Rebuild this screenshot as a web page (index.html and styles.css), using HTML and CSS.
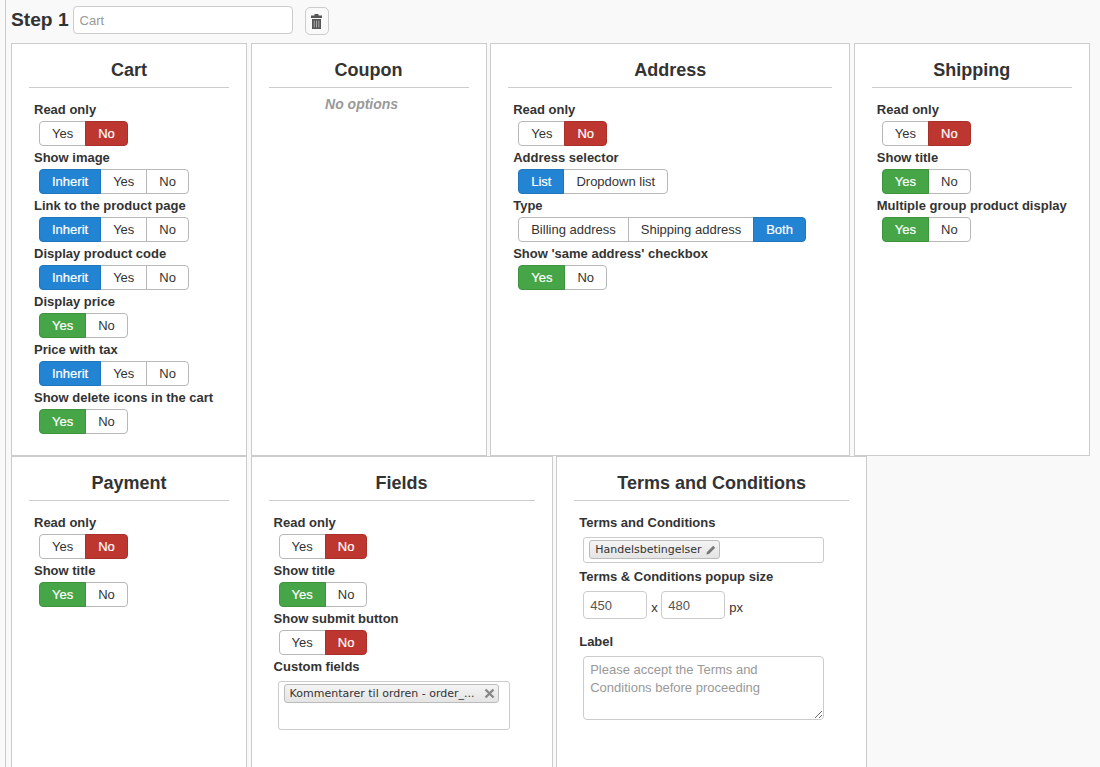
FILE: index.html
```html
<!DOCTYPE html>
<html lang="en">
<head>
<meta charset="utf-8">
<title>Checkout workflow</title>
<link rel="stylesheet" href="styles.css">
</head>
<body>
<main class="main">
  <div class="step-head">
    <span class="step-title">Step 1</span>
    <input class="step-name" type="text" placeholder="Cart">
    <button class="trash" type="button" aria-label="Delete">
      <svg width="11" height="15" viewBox="0 0 11 15"><path fill="#555" d="M3.500 0h4v1.500H11V4H0V1.500h3.500zM1 5h9v10H1z"/><path fill="#aaa" d="M2.700 6.500h1v7h-1zM5 6.500h1v7H5zM7.300 6.500h1v7h-1z"/></svg>
    </button>
  </div>

  <div class="row row-first">
    <section class="card w-236">
      <h3 class="card-title">Cart</h3>
      <div class="label">Read only</div>
      <div class="toggle"><span class="opt">Yes</span><span class="opt red">No</span></div>
      <div class="label">Show image</div>
      <div class="toggle"><span class="opt blue">Inherit</span><span class="opt">Yes</span><span class="opt">No</span></div>
      <div class="label">Link to the product page</div>
      <div class="toggle"><span class="opt blue">Inherit</span><span class="opt">Yes</span><span class="opt">No</span></div>
      <div class="label">Display product code</div>
      <div class="toggle"><span class="opt blue">Inherit</span><span class="opt">Yes</span><span class="opt">No</span></div>
      <div class="label">Display price</div>
      <div class="toggle"><span class="opt green">Yes</span><span class="opt">No</span></div>
      <div class="label">Price with tax</div>
      <div class="toggle"><span class="opt blue">Inherit</span><span class="opt">Yes</span><span class="opt">No</span></div>
      <div class="label">Show delete icons in the cart</div>
      <div class="toggle"><span class="opt green">Yes</span><span class="opt">No</span></div>
    </section>
    <section class="card w-236">
      <h3 class="card-title">Coupon</h3>
      <div class="no-options">No options</div>
    </section>
    <section class="card w-360">
      <h3 class="card-title">Address</h3>
      <div class="label">Read only</div>
      <div class="toggle"><span class="opt">Yes</span><span class="opt red">No</span></div>
      <div class="label">Address selector</div>
      <div class="toggle"><span class="opt blue">List</span><span class="opt">Dropdown list</span></div>
      <div class="label">Type</div>
      <div class="toggle"><span class="opt">Billing address</span><span class="opt">Shipping address</span><span class="opt blue">Both</span></div>
      <div class="label">Show 'same address' checkbox</div>
      <div class="toggle"><span class="opt green">Yes</span><span class="opt">No</span></div>
    </section>
    <section class="card w-236">
      <h3 class="card-title">Shipping</h3>
      <div class="label">Read only</div>
      <div class="toggle"><span class="opt">Yes</span><span class="opt red">No</span></div>
      <div class="label">Show title</div>
      <div class="toggle"><span class="opt green">Yes</span><span class="opt">No</span></div>
      <div class="label">Multiple group product display</div>
      <div class="toggle"><span class="opt green">Yes</span><span class="opt">No</span></div>
    </section>
  </div>

  <div class="row row-second">
    <section class="card w-236">
      <h3 class="card-title">Payment</h3>
      <div class="label">Read only</div>
      <div class="toggle"><span class="opt">Yes</span><span class="opt red">No</span></div>
      <div class="label">Show title</div>
      <div class="toggle"><span class="opt green">Yes</span><span class="opt">No</span></div>
    </section>
    <section class="card w-302">
      <h3 class="card-title">Fields</h3>
      <div class="label">Read only</div>
      <div class="toggle"><span class="opt">Yes</span><span class="opt red">No</span></div>
      <div class="label">Show title</div>
      <div class="toggle"><span class="opt green">Yes</span><span class="opt">No</span></div>
      <div class="label">Show submit button</div>
      <div class="toggle"><span class="opt">Yes</span><span class="opt red">No</span></div>
      <div class="label">Custom fields</div>
      <div class="tag-box tag-box-fields">
        <span class="tag tag-long"><span class="tag-text">Kommentarer til ordren - order_...</span>
          <svg class="tag-icon" width="11" height="11" viewBox="0 0 11 11"><path d="M1.500 1.500l8 8m0-8l-8 8" stroke="#888" stroke-width="2.400" fill="none"/></svg>
        </span>
      </div>
    </section>
    <section class="card w-311">
      <h3 class="card-title">Terms and Conditions</h3>
      <div class="label">Terms and Conditions</div>
      <div class="tag-box tag-box-terms">
        <span class="tag"><span class="tag-text">Handelsbetingelser</span>
          <svg class="tag-icon" width="10" height="10" viewBox="0 0 10 10"><path d="M7.200 .8l2 2L3 9 .4 9.600 1 7z" fill="#777"/></svg>
        </span>
      </div>
      <div class="label label-after-box">Terms &amp; Conditions popup size</div>
      <div class="size-row">
        <input class="size-input" type="text" value="450">
        <span class="size-sep">x</span>
        <input class="size-input" type="text" value="480">
        <span class="size-unit">px</span>
      </div>
      <div class="label label-spaced">Label</div>
      <textarea class="terms-label" placeholder="Please accept the Terms and Conditions before proceeding"></textarea>
    </section>
  </div>
</main>
</body>
</html>
```
FILE: styles.css
```css
* { box-sizing: border-box; }
html, body {
  margin: 0;
  height: 100%;
  overflow: hidden;
  background: #f9f9f9;
}
body {
  font-family: "Liberation Sans", Arial, sans-serif;
  font-size: 13px;
  color: #333;
}
.main {
  margin-left: 5px;
  min-height: 100%;
  border-left: 1px solid #ccc;
  padding: 6px 5px 0;
}
.step-head {
  display: flex;
  align-items: flex-start;
  height: 37px;
}
.step-title {
  font-size: 19.200px;
  font-weight: bold;
  line-height: 27px;
  margin-right: 4px;
}
.step-name {
  width: 220px;
  height: 28px;
  padding: 0 6px;
  border: 1px solid #ccc;
  border-radius: 4px;
  background: #fff;
  font: 13px "Liberation Sans", Arial, sans-serif;
}
.step-name::placeholder { color: #999; }
.trash {
  width: 24px;
  height: 28px;
  margin: 1px 0 0 12px;
  padding: 0;
  display: flex;
  align-items: center;
  justify-content: center;
  border: 1px solid #ccc;
  border-radius: 5px;
  background: #f9f9f9;
}
.row {
  display: flex;
  gap: 3.600px;
}
.row-first { height: 413px; }
.row-second { height: 400px; }
.card {
  flex: none;
  padding: 0 17px;
  border: 1px solid #ccc;
  background: #fff;
}
.w-236 { width: 236px; }
.w-302 { width: 302px; }
.w-311 { width: 311px; }
.w-360 { width: 360px; }
.card-title {
  margin: 0 0 10px;
  height: 44px;
  border-bottom: 1px solid #ccc;
  font-size: 18px;
  font-weight: bold;
  line-height: 53px;
  text-align: center;
}
.label {
  height: 23px;
  padding-left: 5px;
  font-size: 13px;
  font-weight: bold;
  line-height: 23px;
}
.toggle {
  display: flex;
  width: max-content;
  margin-left: 10px;
}
.opt {
  height: 25px;
  padding: 0 12px;
  border: 1px solid #b8b8b8;
  background: #fff;
  line-height: 23px;
}
.opt + .opt { margin-left: -1px; }
.opt:first-child { border-radius: 4px 0 0 4px; }
.opt:last-child { border-radius: 0 4px 4px 0; }
.red, .blue, .green {
  position: relative;
  color: #fff;
  -webkit-text-stroke: 0.2px #fff;
}
.red { background: #bd362f; border-color: #a9302a; }
.blue { background: #2384d3; border-color: #1f76bd; }
.green { background: #46a546; border-color: #3e933e; }
.no-options {
  padding-right: 14px;
  color: #999;
  font-size: 14px;
  font-weight: bold;
  font-style: italic;
  line-height: 12px;
  text-align: center;
}
.tag-box {
  margin: 3px 0 0 9px;
  padding: 2px 5px;
  border: 1px solid #ccc;
  border-radius: 3px;
  background: #fff;
}
.tag-box-fields { width: 232px; height: 49px; }
.tag-box-terms { width: 241px; height: 26px; }
.tag {
  display: inline-flex;
  align-items: center;
  justify-content: space-between;
  height: 19px;
  padding: 0 3px 0 5px;
  border: 1px solid #bbb;
  border-radius: 3px;
  background: linear-gradient(#f4f4f4, #e4e4e4);
  font: 11px "DejaVu Sans", sans-serif;
  color: #333;
  vertical-align: top;
}
.tag-long { width: 215px; }
.tag-text { margin-right: 4px; }
.label-after-box { margin-top: 2px; }
.size-row {
  display: flex;
  align-items: flex-start;
  margin-left: 9px;
  height: 46px;
  padding-top: 3px;
  line-height: 15px;
}
.size-input {
  width: 64px;
  height: 28px;
  padding: 0 6px;
  border: 1px solid #ccc;
  border-radius: 4px;
  background: #fff;
  color: #555;
  font: 13px "Liberation Sans", Arial, sans-serif;
}
.size-sep { width: 14px; padding-top: 9px; padding-left: 4px; }
.size-unit { padding-top: 9px; padding-left: 4px; }
.label-spaced { height: 15px; line-height: 15px; }
.terms-label {
  display: block;
  width: 241px;
  height: 64px;
  margin: 7px 0 0 9px;
  padding: 4px 6px;
  border: 1px solid #ccc;
  border-radius: 4px;
  background: #fff;
  font: 13px/18px "Liberation Sans", Arial, sans-serif;
}
.terms-label::placeholder { color: #999; }
```
